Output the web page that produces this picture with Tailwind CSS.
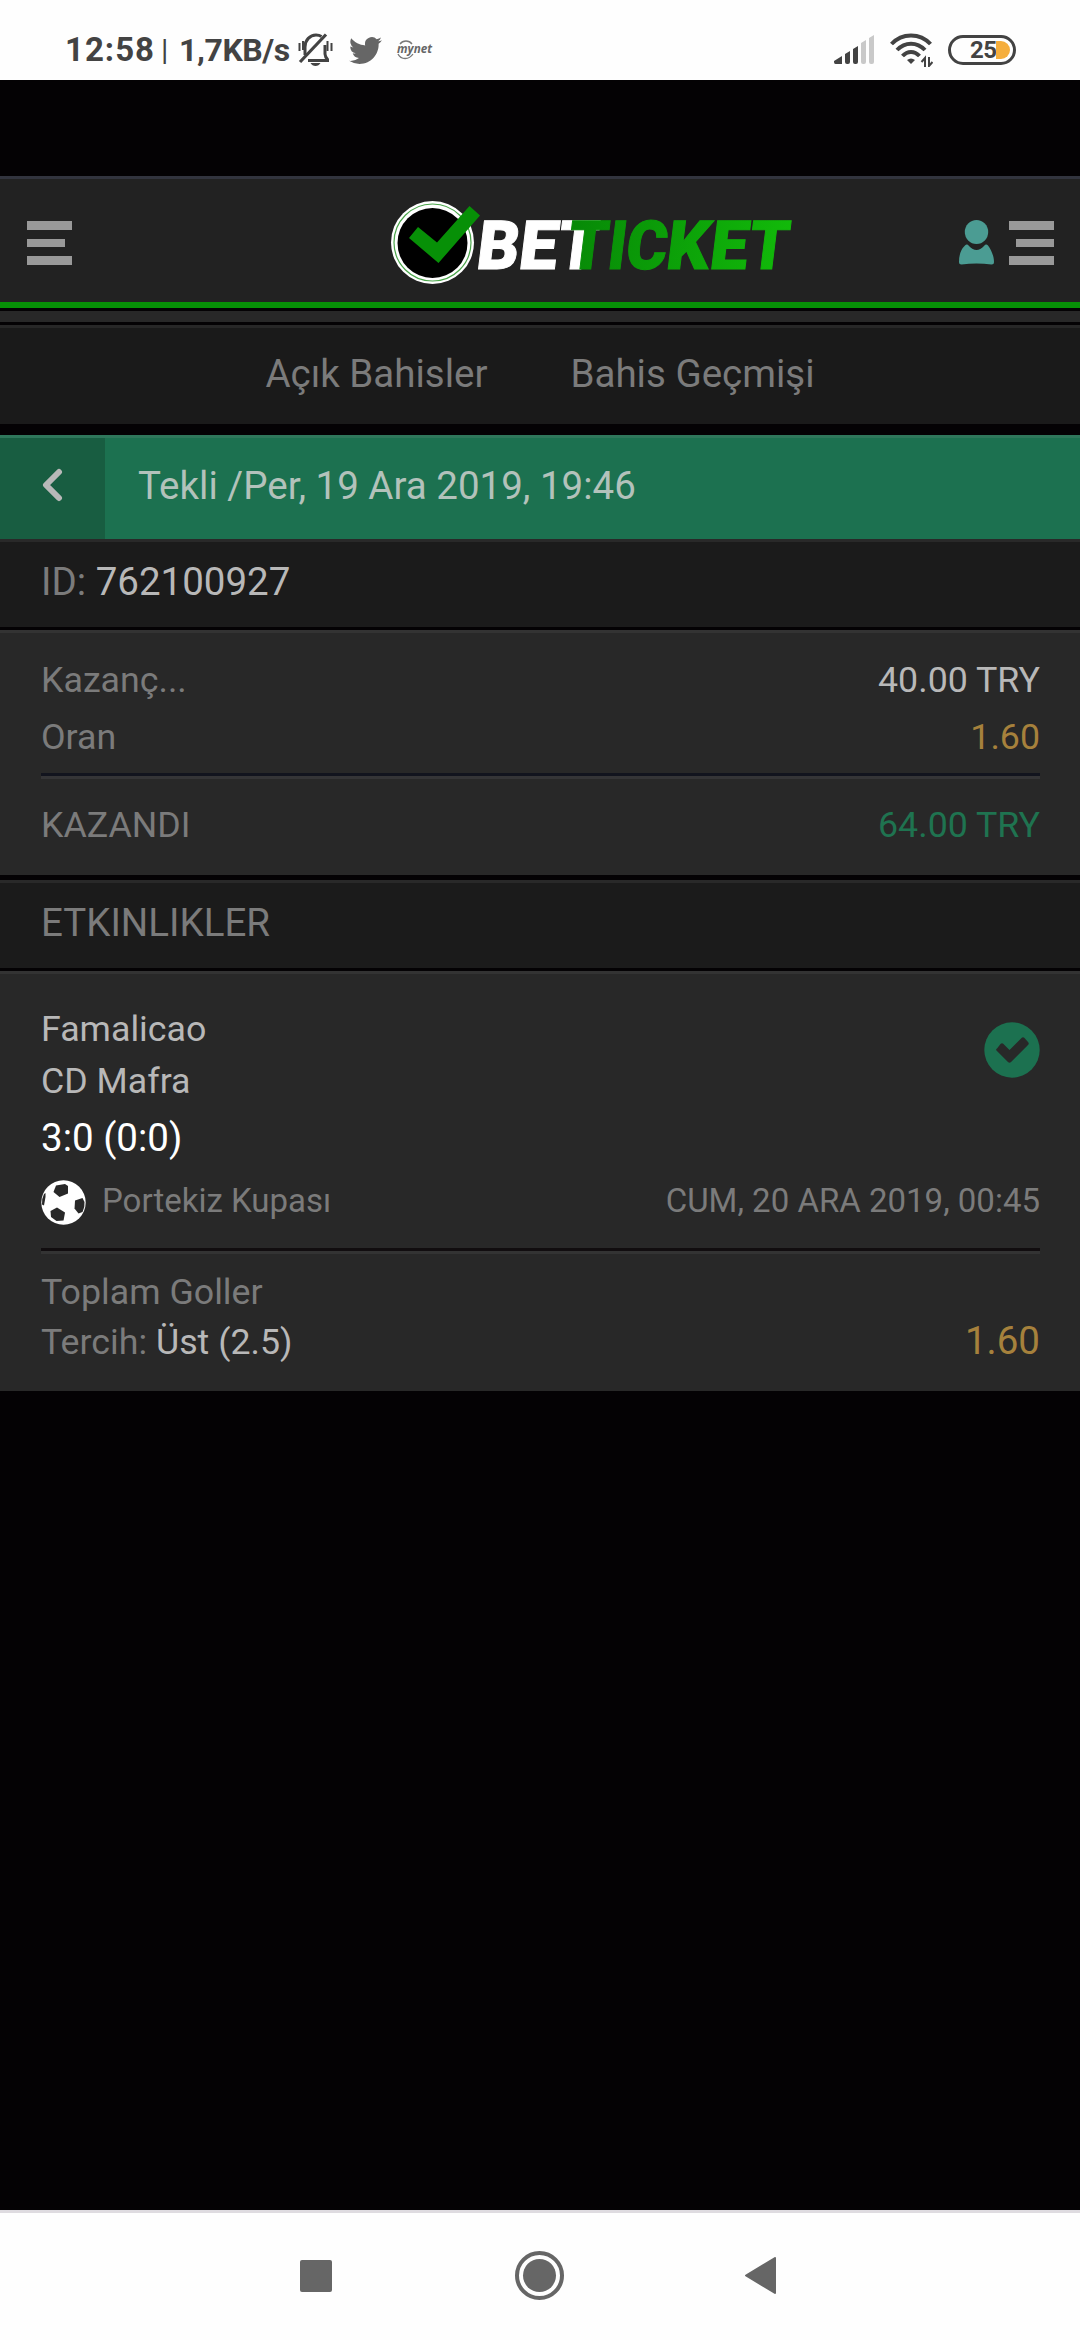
<!doctype html>
<html lang="tr">
<head>
    <meta charset="UTF-8">
    <meta name="viewport" content="width=device-width, initial-scale=1.0">
    <script src="https://cdn.jsdelivr.net/npm/@tailwindcss/browser@4"></script>
    <title>Betticket</title>
</head>
<body class="bg-[#040204]">
    <div class="flex h-[2340px] w-[1080px] flex-col overflow-hidden bg-[#040204] font-['Roboto',sans-serif] text-[38.5px] text-[#7b7b7b]">

        <!-- status bar -->
        <div class="flex h-20 shrink-0 items-center justify-between bg-[#fefefe] pr-[64px] pl-[65px] pt-[21px] pb-[1px] text-[#434343]">
            <div class="flex items-center">
                <span class="w-[96px] text-[33px] leading-[58px] font-bold tracking-[1px] whitespace-nowrap">12:58</span>
                <span class="w-[18px] text-[30px] leading-[54px]">|</span>
                <span class="w-[119px] text-[32px] leading-[58px] font-bold tracking-[-0.4px] whitespace-nowrap">1,7KB/s</span>
                <svg class="h-[34px] w-[35px]" viewBox="0 0 35 34" fill="none" stroke="#434343" stroke-width="3">
                    <path d="M7 22V14C7 7 12 2 18 2c2.500 0 4 .5 5.500 1.500M30 27c-2-2-3-3-3-6V12M10 27.500h21" />
                    <path d="M2 29 28 1.500" stroke-width="3.200" />
                    <path d="M1.500 10v8M5 8v9M29.500 8v10M33.500 10v8" stroke-width="2" />
                    <path d="M12.500 30h10c-1 2-3 3-5 3s-4-1-5-3z" fill="#434343" stroke="none" />
                </svg>
                <svg class="ml-4 h-[33px] w-[33px]" viewBox="0 0 24 24" fill="#666">
                    <path d="M23.950 4.570a10 10 0 0 1-2.820.77 4.960 4.960 0 0 0 2.160-2.720c-.95.55-2 .95-3.130 1.190a4.920 4.920 0 0 0-8.380 4.480C7.690 8.100 4.070 6.130 1.640 3.160a4.930 4.930 0 0 0 1.520 6.570 4.900 4.900 0 0 1-2.230-.61v.06a4.920 4.920 0 0 0 3.950 4.830 5 5 0 0 1-2.210.08 4.940 4.940 0 0 0 4.600 3.420A9.870 9.870 0 0 1 0 19.540a13.990 13.990 0 0 0 7.550 2.210c9.050 0 14-7.500 14-13.980 0-.21 0-.42-.02-.63a9.940 9.940 0 0 0 2.420-2.570z" />
                </svg>
                <svg class="ml-[14px] h-[26px] w-[42px]" viewBox="0 -2 42 26">
                    <path d="M4 5C7 1 13 1 16 5M2 15c3 6 11 6 15 0" fill="none" stroke="#777" stroke-width="1.300" />
                    <text x="1" y="14" textLength="35" lengthAdjust="spacingAndGlyphs" font-family="Open Sans" font-size="13" font-style="italic" font-weight="700" fill="#666">mynet</text>
                </svg>
            </div>
            <div class="flex items-center">
                <svg class="h-[30px] w-[40px]" viewBox="0 0 40 30">
                    <path d="M0 26 8 21v8H1.500Q0 29 0 27z M11 19l5-3v11q0 2-2 2h-1q-2 0-2-2z M19 14l5-3v16q0 2-2 2h-1q-2 0-2-2z" fill="#434343" />
                    <path d="M27 8l5-3v22q0 2-2 2h-1q-2 0-2-2z M35 3l5-3v27q0 2-2 2h-1q-2 0-2-2z" fill="#c9c9c9" />
                </svg>
                <svg class="ml-4 h-[34px] w-[43px]" viewBox="0 0 43 34" fill="none" stroke="#434343" stroke-width="4">
                    <path d="M1.500 11C12-.500 30-.500 40.500 11M7 17c8-8.500 20-8.500 28 0M12.500 23c5-5.500 12-5.500 17 0" />
                    <path d="M17 27q4-3 8 0l-4 4z" fill="#434343" stroke="none" />
                    <path d="M35 34v-9l-3.500 4M39 24v9l3.500-4" stroke-width="2" />
                </svg>
                <div class="ml-[15px] flex h-[30px] w-[68px] items-center rounded-full border-[3px] border-[#434343] pl-[19px]">
                    <span class="w-[26px] text-[24px] leading-none font-bold tracking-[-0.5px]">25</span>
                    <span class="h-[18px] w-[14px] rounded-r-full bg-[#f5ae3d]"></span>
                </div>
            </div>
        </div>

        <!-- site header -->
        <header class="mt-24 flex h-[132px] shrink-0 items-center border-t-[3px] border-b-[6px] border-t-[#32343e] border-b-[#079007] bg-[#222] pt-[4px] pr-[26px] pl-[27px]">
            <div class="flex w-[45px] flex-col gap-[9px]">
                <span class="h-[9px] w-[45px] bg-[#999]"></span>
                <span class="h-[8px] w-[38px] bg-[#999]"></span>
                <span class="h-[9px] w-[45px] bg-[#999]"></span>
            </div>
            <svg class="ml-[316px] h-[90px] w-[416px]" viewBox="388 198 416 90">
                <defs>
                    <linearGradient id="ticket" gradientUnits="userSpaceOnUse" x1="570" y1="0" x2="791" y2="0">
                        <stop offset="0" stop-color="#078a07" />
                        <stop offset="1" stop-color="#12bb0a" />
                    </linearGradient>
                </defs>
                <circle cx="432.500" cy="242.500" r="41.500" fill="#fff" />
                <circle cx="432.500" cy="242.500" r="38.500" fill="none" stroke="#4ba64b" stroke-width="1.200" />
                <circle cx="432.500" cy="243" r="35" fill="#000" />
                <path d="M409 238l9-11 19 15.500L469.500 206 480 215.500 438.500 263z" fill="#079007" />
                <g font-family="Roboto" font-weight="900" font-size="68" transform="translate(0 268.500) skewX(-7)">
                    <text y="0" fill="#fff" stroke="#fff" stroke-width="1"><tspan x="475" textLength="42" lengthAdjust="spacingAndGlyphs">B</tspan><tspan x="517" textLength="38.500" lengthAdjust="spacingAndGlyphs">E</tspan><tspan x="555.500" textLength="40" lengthAdjust="spacingAndGlyphs">T</tspan></text>
                    <text y="0" fill="url(#ticket)" stroke="url(#ticket)" stroke-width="1"><tspan x="565.500" textLength="40" lengthAdjust="spacingAndGlyphs">T</tspan><tspan x="606" textLength="18" lengthAdjust="spacingAndGlyphs">I</tspan><tspan x="624" textLength="41" lengthAdjust="spacingAndGlyphs">C</tspan><tspan x="664.500" textLength="43" lengthAdjust="spacingAndGlyphs">K</tspan><tspan x="708" textLength="38" lengthAdjust="spacingAndGlyphs">E</tspan><tspan x="746.500" textLength="40" lengthAdjust="spacingAndGlyphs">T</tspan></text>
                </g>
            </svg>
            <div class="ml-auto flex items-center gap-[15px]">
                <svg class="h-[45px] w-[35px]" viewBox="0 0 35 45" fill="#4b9c93">
                    <ellipse cx="17.500" cy="12" rx="11.700" ry="12" />
                    <path d="M6 25.500q2-2 4 .5 7.500 8 15 0 2-2.500 4-.5C33 31 35 37 35 42q0 2.500-2.500 2.500-15-2-30 0Q0 44.500 0 42 0 31 6 25.500z" />
                </svg>
                <div class="flex flex-col items-end gap-[9px]">
                    <span class="h-[9px] w-[45px] bg-[#999]"></span>
                    <span class="h-[8px] w-[38px] bg-[#999]"></span>
                    <span class="h-[9px] w-[45px] bg-[#999]"></span>
                </div>
            </div>
        </header>
        <div class="mt-[3px] h-[11px] shrink-0 bg-[#282828]"></div>

        <!-- tabs -->
        <nav class="mt-[3px] flex h-[99px] shrink-0 justify-center gap-[83px] border-t-[3px] border-[#272727] bg-[#1a1a1a] leading-[92px]">
            <a>Açık Bahisler</a>
            <a>Bahis Geçmişi</a>
        </nav>

        <!-- coupon title -->
        <div class="mt-[11px] flex h-[104px] shrink-0 border-t-[3px] border-[#2f775b] bg-[#1c7150] text-[#b3c2bb]">
            <div class="flex w-[105px] items-center justify-center bg-[#185d41] pr-[2px] pb-[7px]">
                <svg class="h-[34px] w-[22px]" viewBox="0 0 22 34" fill="none" stroke="#b8b8b8" stroke-width="6" stroke-linecap="round" stroke-linejoin="round"><path d="M18 4 5 17l13 13" /></svg>
            </div>
            <div class="pl-[33px] leading-[96px]">Tekli /Per, 19 Ara 2019, 19:46</div>
        </div>
        <div class="h-[88px] shrink-0 border-t-[3px] border-[#292929] bg-[#1b1b1b] pl-[41px] leading-[80px]">ID: <span class="text-[#b8b8b8]">762100927</span></div>

        <!-- totals -->
        <section class="mt-[3px] h-[245px] shrink-0 border-t-[3px] border-[#333] bg-[#282828] pt-[19px] pr-[40px] pl-[41px] text-[35.75px] leading-[57px]">
            <div class="flex justify-between"><span>Kazanç...</span><span class="text-[#b8b8b8]">40.00 TRY</span></div>
            <div class="flex justify-between"><span>Oran</span><span class="text-[#a6813c]">1.60</span></div>
            <div class="mt-[7px] h-[6px] border-t-[3px] border-[#12141e] bg-[#353537]"></div>
            <div class="mt-[18px] flex justify-between"><span>KAZANDI</span><span class="text-[#1f7350]">64.00 TRY</span></div>
        </section>

        <h2 class="mt-[5px] h-[88px] shrink-0 border-t-[3px] border-[#292929] bg-[#1b1b1b] pl-[41px] leading-[80px]">ETKINLIKLER</h2>

        <!-- event -->
        <section class="mt-[3px] h-[420px] shrink-0 border-t-[3px] border-[#333] bg-[#282828] pt-[29px] pr-[40px] pl-[41px] text-[35.75px]">
            <div class="flex justify-between">
                <div class="text-[#b8b8b8]">
                    <div class="leading-[52px]">Famalicao</div>
                    <div class="leading-[52px]">CD Mafra</div>
                    <div class="text-[38.5px] leading-[62px] text-white">3:0 (0:0)</div>
                </div>
                <svg class="mt-[19px] h-[56px] w-[56px]" viewBox="0 0 56 56">
                    <circle cx="28" cy="28" r="27.700" fill="#1c7150" />
                    <path d="M13 26.500 16.500 22q1.500-1.500 3 0l6 6L37.500 16q1.500-1.500 3 0l3.500 4q1.500 1.500 0 3L27 40q-1.500 1.500-3 0L12.500 28.500q-1-1 .5-2z" fill="#282828" />
                </svg>
            </div>
            <div class="mt-[8px] flex h-[50px] items-center text-[33px]">
                <svg class="h-[45px] w-[45px]" viewBox="0 0 45 45">
                    <circle cx="22.500" cy="22.500" r="22.200" fill="#fff" />
                    <g fill="#282828">
                        <path d="M15 5.500 24 4l3 2v7.500L18.500 17 12.500 12z" />
                        <path d="M34 20.500l7.500-2.500 2 4q.5 5-2 10l-4 1.500-4-5z" />
                        <path d="M16 27.500l8 5-1.500 8-7 .500L10 37l-.5-6z" />
                        <path d="M4.500 13v4L3 25.500l-2-1Q.8 18 3 14z" />
                    </g>
                </svg>
                <span class="ml-[16px] pb-[2px]">Portekiz Kupası</span>
                <span class="ml-auto pb-[2px]">CUM, 20 ARA 2019, 00:45</span>
            </div>
            <div class="mt-[21px] h-[6px] border-t-[3px] border-[#110d0f] bg-[#333]"></div>
            <div class="mt-[13px] flex items-end justify-between leading-[50px]">
                <div>
                    <div>Toplam Goller</div>
                    <div>Tercih: <span class="text-[#b8b8b8]">Üst (2.5)</span></div>
                </div>
                <span class="text-[38.5px] leading-[52px] text-[#a6813c]">1.60</span>
            </div>
        </section>

        <!-- system navigation -->
        <div class="mt-auto flex h-[130px] shrink-0 items-center border-t-[3px] border-[#dedbe0] bg-[#fefefe] pb-[2px] pl-[300px]">
            <div class="h-[32px] w-[32px] rounded-[2px] bg-[#666]"></div>
            <svg class="ml-[183px] h-[49px] w-[49px]" viewBox="0 0 49 49" fill="#666">
                <circle cx="24.500" cy="24.500" r="22.500" fill="none" stroke="#666" stroke-width="4" />
                <circle cx="24.500" cy="24.500" r="16.500" />
            </svg>
            <svg class="ml-[181px] h-[37px] w-[31px]" viewBox="0 0 31 37" fill="#666" stroke="#666" stroke-width="2" stroke-linejoin="round"><path d="M1 18.500 30 1v35z" /></svg>
        </div>
    </div>
</body>
</html>
